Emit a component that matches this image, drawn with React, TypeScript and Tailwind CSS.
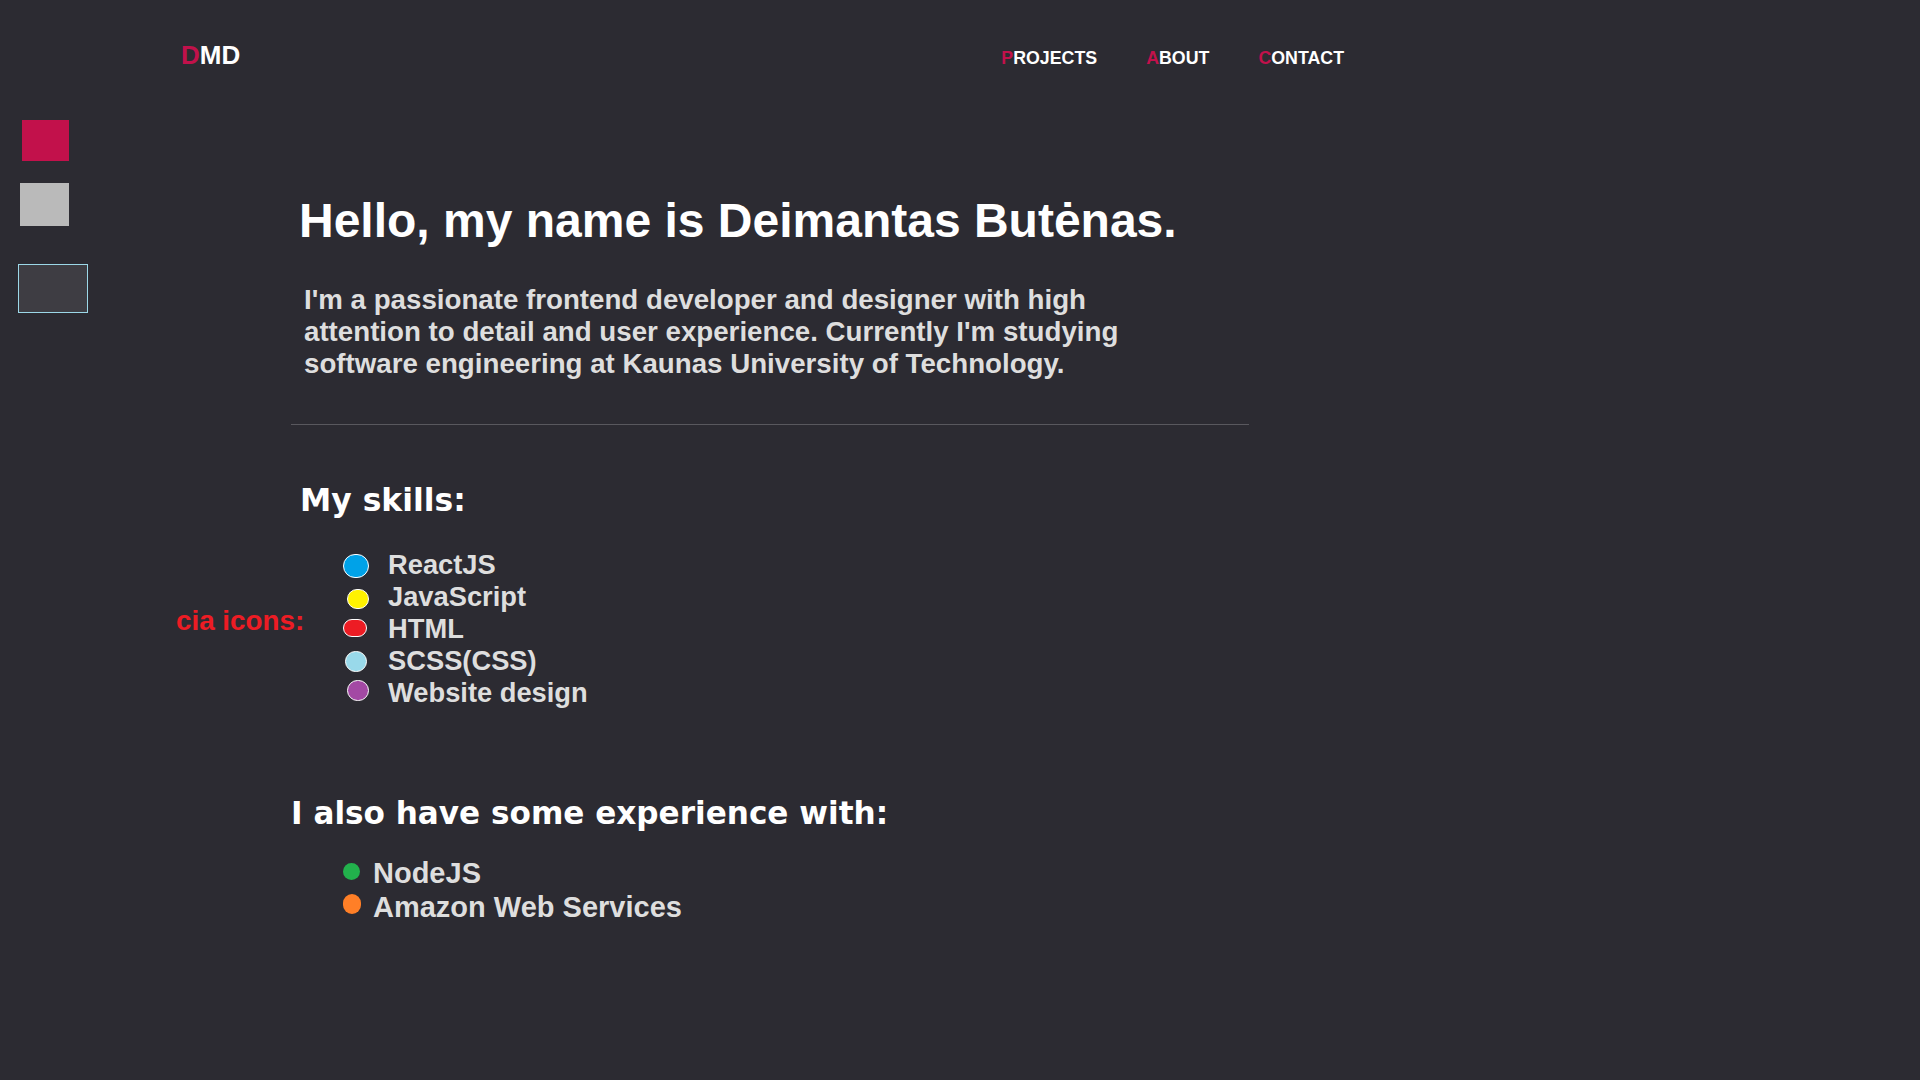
import React from "react";

const skills = [
  { name: "ReactJS", color: "bg-[#00a2e8]", size: "w-[26px] h-[24px] mt-[5px] ml-0" },
  { name: "JavaScript", color: "bg-[#fff200]", size: "w-[22px] h-[20px] mt-[8px] ml-[4px]" },
  { name: "HTML", color: "bg-[#ed1c24]", size: "w-[24px] h-[18px] mt-[6px] ml-0" },
  { name: "SCSS(CSS)", color: "bg-[#99d9ea]", size: "w-[22px] h-[21px] mt-[6px] ml-[2px]" },
  { name: "Website design", color: "bg-[#a349a4]", size: "w-[22px] h-[21px] mt-[3px] ml-[4px]" },
];

const extra = [
  { name: "NodeJS", color: "bg-[#22b14c]", size: "w-[17px] h-[17px] mt-[7px]" },
  { name: "Amazon Web Services", color: "bg-[#ff7f27]", size: "w-[18px] h-[20px] mt-[4px]" },
];

function NavLink({ label }: { label: string }) {
  return (
    <a className="text-white">
      <span className="text-[#c2114b]">{label[0]}</span>
      {label.slice(1)}
    </a>
  );
}

export default function App() {
  return (
    <div className="min-h-screen bg-[#2c2b32] font-['Liberation_Sans',Arial,sans-serif] font-bold">
      {/* header */}
      <div className="flex items-baseline justify-between w-[1344px] pl-[181px] pt-[42px] leading-none">
        <div className="text-[26px] text-white">
          <span className="text-[#c2114b]">D</span>MD
        </div>
        <nav className="flex gap-[49px] text-[17.8px]">
          <NavLink label="PROJECTS" />
          <NavLink label="ABOUT" />
          <NavLink label="CONTACT" />
        </nav>
      </div>

      <div className="flex">
        {/* left squares */}
        <div className="flex flex-col items-start w-[88px]">
          <div className="mt-[52px] ml-[22px] w-[47px] h-[41px] bg-[#c2114b]"></div>
          <div className="mt-[22px] ml-[20px] w-[49px] h-[43px] bg-[#bababa]"></div>
          <div className="mt-[38px] ml-[18px] w-[70px] h-[49px] bg-[#3e3d43] border border-[#9cd8e8]"></div>
        </div>

        {/* content */}
        <div className="ml-[203px] w-[958px] pb-[120px]">
          <h1 className="mt-[129px] pl-[8px] text-[48px] leading-none text-white">
            Hello, my name is Deimantas Butėnas.
          </h1>
          <p className="mt-[39px] pl-[13px] w-[870px] text-[27.7px] leading-[32px] text-[#dedede]">
            I'm a passionate frontend developer and designer with high attention to detail and user
            experience. Currently I'm studying software engineering at Kaunas University of Technology.
          </p>
          <div className="mt-[44px] h-px bg-[#59585e]"></div>

          <h2 className="mt-[60px] pl-[9px] font-['DejaVu_Sans',sans-serif] text-[31.4px] leading-none text-white">
            My skills:
          </h2>
          <div className="relative">
            <div className="absolute left-[-115px] top-[58px] text-[27.8px] leading-none text-[#ed1c24]">
              cia icons:
            </div>
            <ul className="mt-[33px] pl-[52px] text-[27.3px] leading-[32px] text-[#dedede]">
              {skills.map((s) => (
                <li key={s.name} className="flex items-start">
                  <div className="w-[45px] shrink-0">
                    <div className={`rounded-full border border-white ${s.color} ${s.size}`}></div>
                  </div>
                  <span>{s.name}</span>
                </li>
              ))}
            </ul>
          </div>

          <h2 className="mt-[89px] font-['DejaVu_Sans',sans-serif] text-[31.1px] leading-none text-white">
            I also have some experience with:
          </h2>
          <ul className="mt-[26px] pl-[52px] text-[29px] leading-[34px] text-[#dedede]">
            {extra.map((s) => (
              <li key={s.name} className="flex items-start">
                <div className="w-[30px] shrink-0">
                  <div className={`rounded-full ${s.color} ${s.size}`}></div>
                </div>
                <span>{s.name}</span>
              </li>
            ))}
          </ul>
        </div>
      </div>
    </div>
  );
}
